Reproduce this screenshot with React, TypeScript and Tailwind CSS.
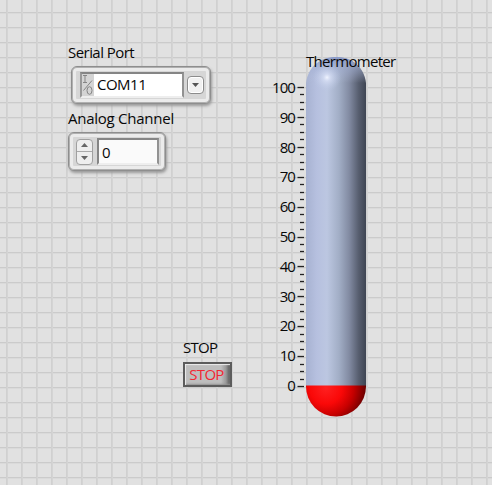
import React from "react";

const labels = [100, 90, 80, 70, 60, 50, 40, 30, 20, 10, 0];
const ticks = Array.from({ length: 41 }, (_, i) => i);

function Label({ children, className = "" }: { children: React.ReactNode; className?: string }) {
  return <div className={"h-5 whitespace-nowrap leading-5 " + className}>{children}</div>;
}

function SerialPort() {
  return (
    <div className="ml-[3px] mt-[4px] flex h-[38px] w-[140px] items-center rounded-[6px] border border-[#8e8e8e] bg-[#d6d6d6] shadow-[1px_2px_3px_#999,inset_0_0_0_1px_#b0b0b0,inset_0_0_0_4px_#ebebeb] pl-[8px]">
      <div className="flex h-[26px] w-[104px] border-2 border-t-[#858585] border-l-[#999] border-r-[#929292] border-b-[#eee] bg-white">
        <svg width="12" height="22" viewBox="0 0 12 22" className="shrink-0 bg-[#d4d4d4]" fill="none" stroke="#858585">
          <path d="M1 1.5h4M3 1.5v7M1 8.5h4M1.5 16.5L10 6.5" />
          <ellipse cx="7.5" cy="16.5" rx="2.5" ry="3.8" />
        </svg>
        <span className="pl-[3px] text-[15px] leading-[20px] tracking-[-0.5px]">COM11</span>
      </div>
      <div className="ml-[3px] flex h-[18px] w-[17px] items-center justify-center rounded-[4px] border border-[#8c8c8c] bg-[#f1f1f1] shadow-[inset_0_0_0_1px_#fff]">
        <svg width="7" height="4"><path d="M0 0h7L3.5 4z" fill="#555" /></svg>
      </div>
    </div>
  );
}

function AnalogChannel() {
  return (
    <div className="mt-[4px] flex h-[39px] w-[98px] items-center rounded-[6px] border border-[#8e8e8e] bg-[#d6d6d6] shadow-[1px_2px_3px_#999,inset_0_0_0_1px_#b0b0b0,inset_0_0_0_4px_#ebebeb] pl-[7px]">
      <div className="flex h-[26px] w-[17px] flex-col overflow-hidden rounded-[4px] border border-[#a0a0a0] bg-[#eee]">
        <div className="flex flex-1 items-center justify-center border-b border-[#aaa]">
          <svg width="7" height="4"><path d="M0 4h7L3.5 0z" fill="#666" /></svg>
        </div>
        <div className="flex flex-1 items-center justify-center">
          <svg width="7" height="4"><path d="M0 0h7L3.5 4z" fill="#666" /></svg>
        </div>
      </div>
      <div className="ml-[4px] h-[27px] w-[62px] border-2 border-t-[#858585] border-l-[#858585] border-r-[#929292] border-b-[#eee] bg-[#fafafa] pl-[3px] leading-[24px]">0</div>
    </div>
  );
}

function Tube() {
  return (
    <svg width="60" height="361" viewBox="0 0 60 361" className="block">
      <defs>
        <linearGradient id="glass">
          <stop offset="0" stopColor="#a7b2d1" />
          <stop offset=".18" stopColor="#b6c0df" />
          <stop offset=".35" stopColor="#bcc7e1" />
          <stop offset=".55" stopColor="#a2aec6" />
          <stop offset=".72" stopColor="#828ba2" />
          <stop offset=".88" stopColor="#565d6e" />
          <stop offset="1" stopColor="#3f4553" />
        </linearGradient>
        <linearGradient id="crown" x2="0" y2="1">
          <stop offset="0" stopColor="#8b9bc8" />
          <stop offset=".4" stopColor="#a2afd2" stopOpacity=".6" />
          <stop offset="1" stopColor="#b6c0df" stopOpacity="0" />
        </linearGradient>
        <radialGradient id="shine">
          <stop offset="0" stopColor="#f0f4ff" />
          <stop offset=".25" stopColor="#d6def4" stopOpacity=".8" />
          <stop offset="1" stopColor="#bac6e4" stopOpacity="0" />
        </radialGradient>
        <radialGradient id="fluid" gradientUnits="userSpaceOnUse" cx="20" cy="332" r="46">
          <stop offset="0" stopColor="#ff2020" />
          <stop offset=".35" stopColor="#fa0808" />
          <stop offset=".6" stopColor="#c60000" />
          <stop offset=".85" stopColor="#700000" />
          <stop offset="1" stopColor="#390000" />
        </radialGradient>
      </defs>
      <path d="M0 330V27C2 11 14 1 30 1s28 10 30 26v303z" fill="url(#glass)" />
      <path d="M0 27C2 11 14 1 30 1s28 10 30 26z" fill="url(#crown)" />
      <circle cx="21" cy="21.5" r="14" fill="url(#shine)" />
      <path d="M0 329.5h60v1a30 30 0 0 1-60 0z" fill="url(#fluid)" />
    </svg>
  );
}

export default function App() {
  return (
    <main className="flex h-[485px] w-[492px] overflow-hidden bg-[#e1e1e1] bg-[linear-gradient(to_right,#d0d0d0_1px,#d4d4d4_1px,#d4d4d4_2px,transparent_2px),linear-gradient(to_bottom,#cbcbcb_1px,#dadada_1px,#dadada_2px,transparent_2px)] bg-[length:15px_15px] bg-[position:6px_12px] font-['Open_Sans','Noto_Sans',sans-serif] text-[15px] text-[#080808]">
      <section className="w-[198px] shrink-0 pl-[68px] pt-[42px]">
        <Label className="tracking-[-0.55px]">Serial Port</Label>
        <SerialPort />
        <Label className="mt-[4px] tracking-[-0.25px]">Analog Channel</Label>
        <AnalogChannel />
        <div className="ml-[115px] mt-[166px]">
          <Label className="tracking-[-0.7px]">STOP</Label>
          <button className="mt-[5px] flex h-[25px] w-[49px] items-center justify-center border-2 border-[#5c5c5c] bg-[linear-gradient(90deg,#bebebe_80%,#999_91%,#555)] pr-[2px] text-[#f32632] tracking-[-0.7px] shadow-[inset_1px_1px_1px_#eee,inset_0_-1px_2px_#909090]">STOP</button>
        </div>
      </section>
      <section className="ml-[67px] flex pt-[56px]">
        <div className="flex h-[329px] w-[30px] flex-col justify-between pt-[21px] text-right tracking-[-0.9px]">
          {labels.map((n) => (
            <div key={n} className="-mb-[10px] h-[20px] shrink-0 leading-5">{n}</div>
          ))}
        </div>
        <svg width="10" height="361" className="ml-[1px] shrink-0">
          {ticks.map((i) => (
            <path key={i} d={`M${i % 4 ? 4 : 1.5} ${Math.round(31 + i * 7.475) + 0.5}H8`} stroke="#222" strokeWidth="1.3" />
          ))}
        </svg>
        <div className="relative h-[361px] w-[60px]">
          <Tube />
          <span className="absolute left-0 top-[-5px] whitespace-nowrap leading-5 tracking-[-0.7px]">Thermometer</span>
        </div>
      </section>
    </main>
  );
}
